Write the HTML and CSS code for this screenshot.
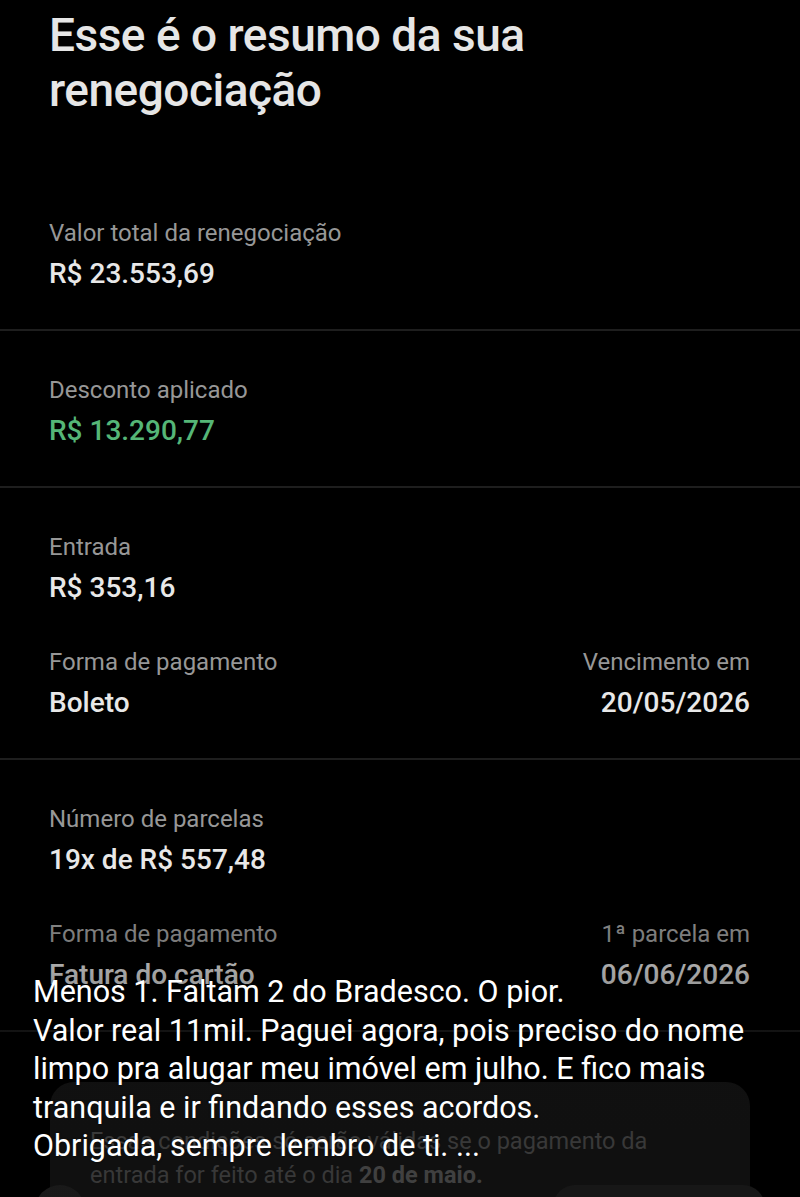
FILE: index.html
```html
<!DOCTYPE html>
<html lang="pt-BR">
<head>
    <meta charset="UTF-8">
    <meta name="viewport" content="width=device-width, initial-scale=1.0">
    <title>Resumo da renegociação</title>
    <link rel="stylesheet" href="styles.css">
</head>
<body>
    <div class="screen">
        <h1 class="title">Esse é o resumo da sua<br>renegociação</h1>

        <div class="section">
            <div class="field">
                <div class="label">Valor total da renegociação</div>
                <div class="value">R$ 23.553,69</div>
            </div>
        </div>

        <div class="section">
            <div class="field">
                <div class="label">Desconto aplicado</div>
                <div class="value green">R$ 13.290,77</div>
            </div>
        </div>

        <div class="section">
            <div class="field">
                <div class="label">Entrada</div>
                <div class="value">R$ 353,16</div>
            </div>
            <div class="row">
                <div class="field">
                    <div class="label">Forma de pagamento</div>
                    <div class="value">Boleto</div>
                </div>
                <div class="field right">
                    <div class="label">Vencimento em</div>
                    <div class="value">20/05/2026</div>
                </div>
            </div>
        </div>

        <div class="section">
            <div class="field">
                <div class="label">Número de parcelas</div>
                <div class="value">19x de R$ 557,48</div>
            </div>
            <div class="row">
                <div class="field">
                    <div class="label">Forma de pagamento</div>
                    <div class="value">Fatura do cartão</div>
                </div>
                <div class="field right">
                    <div class="label">1ª parcela em</div>
                    <div class="value">06/06/2026</div>
                </div>
            </div>
        </div>

        <div class="notice">
            Essas condições só serão válidas se o pagamento da<br>
            entrada for feito até o dia <strong>20 de maio.</strong>
        </div>

        <div class="actions">
            <div class="round-btn"></div>
            <div class="pill-btn"></div>
        </div>

        <!-- story overlay -->
        <div class="shade"></div>
        <div class="caption">
            Menos 1. Faltam 2 do Bradesco. O pior.<br>
            Valor real 11mil. Paguei agora, pois preciso do nome<br>
            limpo pra alugar meu imóvel em julho. E fico mais<br>
            tranquila e ir findando esses acordos.<br>
            Obrigada, sempre lembro de ti. ...
        </div>
    </div>
</body>
</html>
```

FILE: styles.css
```css
body {
    margin: 0;
    background: #000;
    color: #e8e8e8;
    font-family: Roboto, "Noto Sans", sans-serif;
    height: 1197px;
    overflow: hidden;
}

.screen {
    position: relative;
    height: 1197px;
    overflow: hidden;
}

.title {
    margin: 8px 0 56px;
    padding: 0 49px;
    font-size: 46px;
    line-height: 55px;
    font-weight: 500;
    letter-spacing: -0.5px;
    color: #e6e6e6;
}

.section {
    padding: 45px 50px 40px 49px;
    border-bottom: 2px solid #1e1e1e;
    display: flex;
    flex-direction: column;
    gap: 45px;
}

.row {
    display: flex;
    justify-content: space-between;
}

.field.right {
    text-align: right;
}

.label {
    font-size: 24px;
    line-height: 28px;
    color: #979797;
    margin-bottom: 12px;
}

.value {
    font-size: 28px;
    line-height: 30px;
    font-weight: 500;
    color: #e8e8e8;
}

.value.green {
    color: #55b677;
}

.notice {
    margin: 50px 50px 0;
    padding: 42px 30px 30px 40px;
    background: #1a1a1a;
    border-radius: 24px;
    font-size: 23.5px;
    line-height: 34px;
    color: #5c5c5c;
    white-space: nowrap;
}

.notice strong {
    color: #6a6a6a;
    font-weight: 700;
}

.actions {
    display: flex;
    justify-content: space-between;
    margin: -37px 35px 0;
}

.round-btn {
    width: 50px;
    height: 50px;
    border-radius: 50%;
    background: #2a2a2a;
}

.pill-btn {
    width: 212px;
    height: 50px;
    border-radius: 22px;
    background: #262626;
}

.shade {
    position: absolute;
    left: 0;
    right: 0;
    top: 880px;
    bottom: 0;
    background: linear-gradient(to bottom, rgba(0, 0, 0, 0) 0, rgba(0, 0, 0, 0.35) 110px, rgba(0, 0, 0, 0.4) 100%);
}

.caption {
    position: absolute;
    left: 33px;
    top: 973px;
    font-size: 30.5px;
    line-height: 38.5px;
    color: #fff;
    white-space: nowrap;
    text-shadow: 0 0 2px rgba(0, 0, 0, 0.5);
}
```
